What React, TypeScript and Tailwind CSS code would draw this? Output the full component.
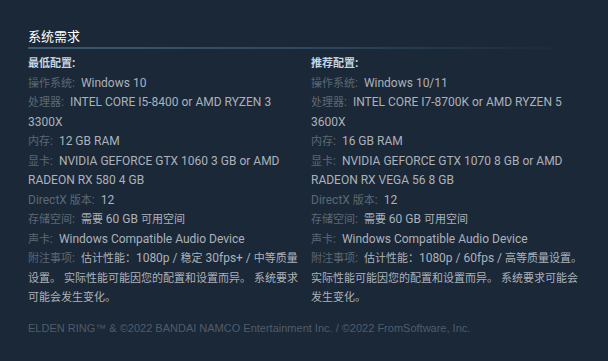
import React from "react";

const CJK = /([\u2E80-\u9FFF\u3000-\u303F\uFF00-\uFFEF]+)/;

function T({ s, size = "text-[11px]" }: { s: string; size?: string }) {
  const parts = s.split(CJK);
  return (
    <>
      {parts.map((p, i) =>
        CJK.test(p) ? (
          <span key={i} className={size}>
            {p}
          </span>
        ) : (
          <React.Fragment key={i}>{p}</React.Fragment>
        )
      )}
    </>
  );
}

type Row = { label: string; value: string };

const minRows: Row[] = [
  { label: "操作系统:", value: "Windows 10" },
  { label: "处理器:", value: "INTEL CORE I5-8400 or AMD RYZEN 3 3300X" },
  { label: "内存:", value: "12 GB RAM" },
  { label: "显卡:", value: "NVIDIA GEFORCE GTX 1060 3 GB or AMD RADEON RX 580 4 GB" },
  { label: "DirectX 版本:", value: "12" },
  { label: "存储空间:", value: "需要 60 GB 可用空间" },
  { label: "声卡:", value: "Windows Compatible Audio Device" },
  {
    label: "附注事项:",
    value: "估计性能：1080p / 稳定 30fps+ / 中等质量设置。 实际性能可能因您的配置和设置而异。 系统要求可能会发生变化。",
  },
];

const recRows: Row[] = [
  { label: "操作系统:", value: "Windows 10/11" },
  { label: "处理器:", value: "INTEL CORE I7-8700K or AMD RYZEN 5 3600X" },
  { label: "内存:", value: "16 GB RAM" },
  { label: "显卡:", value: "NVIDIA GEFORCE GTX 1070 8 GB or AMD RADEON RX VEGA 56 8 GB" },
  { label: "DirectX 版本:", value: "12" },
  { label: "存储空间:", value: "需要 60 GB 可用空间" },
  { label: "声卡:", value: "Windows Compatible Audio Device" },
  {
    label: "附注事项:",
    value: "估计性能：1080p / 60fps / 高等质量设置。 实际性能可能因您的配置和设置而异。 系统要求可能会发生变化。",
  },
];

function Col({ title, rows }: { title: string; rows: Row[] }) {
  return (
    <div className="w-[277px]">
      <div className="font-bold text-[#c6d4df]">
        <T s={title} />
      </div>
      <ul>
        {rows.map((r, i) => (
          <li key={i}>
            <span className="text-[#5c6873]">
              <T s={r.label} />
            </span>{" "}
            <span className="pl-[3px] text-[#acb2b8]">
              <T s={r.value} />
            </span>
          </li>
        ))}
      </ul>
    </div>
  );
}

export default function App() {
  return (
    <div
      className="w-[608px] h-[361px] bg-[#1b2838] overflow-hidden text-[12px] leading-[19.5px]"
      style={{ fontFamily: 'Roboto, "Liberation Sans", Arial, "Noto Sans CJK SC", sans-serif' }}
    >
      <div className="pt-[27px] pl-[28px]">
        <h2 className="text-white text-[14px] leading-[18px] font-normal">
          <T s="系统需求" size="text-[13px]" />
        </h2>
        <div className="mt-[1px] h-[2px] w-[540px] bg-gradient-to-r from-[#3a5a72] via-[#2e4a60] to-transparent" />
        <div className="mt-[5px] flex gap-[6px]">
          <Col title="最低配置:" rows={minRows} />
          <Col title="推荐配置:" rows={recRows} />
        </div>
        <div
          className="mt-[11px] text-[11px] text-[#4f5d6a]"
          style={{ fontFamily: '"Liberation Sans", Arial, sans-serif' }}
        >
          ELDEN RING™ &amp; ©2022 BANDAI NAMCO Entertainment Inc. / ©2022 FromSoftware, Inc.
        </div>
      </div>
    </div>
  );
}
